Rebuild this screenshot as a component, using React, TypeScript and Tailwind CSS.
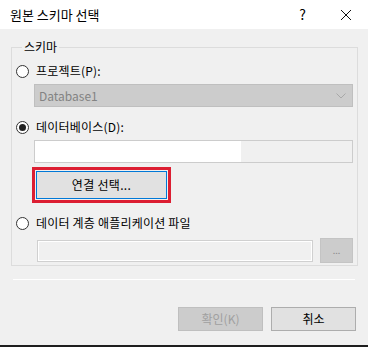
import React from 'react';

const font = { fontFamily: '"Noto Sans CJK KR", "Noto Sans", sans-serif' };

const Radio: React.FC<{ checked?: boolean; label: string }> = ({ checked, label }) => (
  <div className="flex items-center h-[16px]">
    <span className="w-[13px] h-[13px] rounded-full border border-[#333333] bg-white flex items-center justify-center">
      {checked && <span className="w-[7px] h-[7px] rounded-full bg-[#222222]" />}
    </span>
    <span className="ml-[7px] text-[12px] text-black leading-none tracking-[0.2px]">{label}</span>
  </div>
);

const App: React.FC = () => {
  return (
    <div className="w-[368px] h-[347px] bg-[#f0f0f0] flex flex-col overflow-hidden" style={font}>
      {/* title bar */}
      <div className="h-[29px] bg-white flex items-center shrink-0">
        <span className="ml-[10px] text-[13px] text-black">원본 스키마 선택</span>
        <span className="ml-auto mr-[34px] text-[14px] text-black">?</span>
        <svg width="12" height="12" viewBox="0 0 12 12" className="mr-[16px]">
          <path d="M1 1 L11 11 M11 1 L1 11" stroke="#111" strokeWidth="1" />
        </svg>
      </div>

      <fieldset className="mx-[11px] mt-[12px] h-[225px] border border-[#dcdcdc] pl-[4px] pr-[4px] pb-0 pt-[10px]">
        <legend className="ml-[6px] px-[2px] text-[12px] text-black leading-none">스키마</legend>

        <Radio label="프로젝트(P):" />
        <div className="mt-[5px] ml-[18px] h-[23px] bg-[#cccccc] border border-[#bfbfbf] flex items-center px-[4px]">
          <span className="text-[12px] text-[#838383]">Database1</span>
          <svg width="10" height="6" viewBox="0 0 10 6" className="ml-auto mr-[2px]">
            <path d="M0.5 0.5 L5 5 L9.5 0.5" fill="none" stroke="#a8a8a8" strokeWidth="1" />
          </svg>
        </div>

        <div className="mt-[12px]">
          <Radio checked label="데이터베이스(D):" />
        </div>
        <div className="mt-[5px] ml-[18px] h-[23px] bg-[#f0f0f0] border border-[#cccccc] flex">
          <div className="w-[206px] bg-white" />
        </div>

        <div className="mt-[4px] ml-[16px] w-[139px] h-[36px] border-[3px] border-[#dc1e32] p-[1px]">
          <div className="h-full bg-[#e1e1e1] border border-[#0078d7] flex items-center justify-center">
            <span className="text-[12px] text-black tracking-[0.3px]">연결 선택...</span>
          </div>
        </div>

        <div className="mt-[12px]">
          <Radio label="데이터 계층 애플리케이션 파일" />
        </div>
        <div className="mt-[7px] ml-[21px] flex items-center">
          <div className="w-[276px] h-[22px] border border-[#d0d0d0] bg-[#f0f0f0] shadow-[inset_0_0_0_1px_#ffffff]" />
          <div className="ml-[7px] w-[33px] h-[25px] bg-[#cccccc] border border-[#c4c4c4] flex items-center justify-center">
            <span className="text-[9px] text-[#8a8a8a] leading-none">...</span>
          </div>
        </div>
      </fieldset>

      <div className="mt-[13px] mx-[13px] h-[1px] bg-white" />

      <div className="mt-[27px] flex justify-end pr-[12px] gap-[8px]">
        <div className="w-[85px] h-[24px] bg-[#cccccc] border border-[#bfbfbf] flex items-center justify-center">
          <span className="text-[12px] text-[#a0a0a0]">확인(K)</span>
        </div>
        <div className="w-[85px] h-[24px] bg-[#e1e1e1] border border-[#adadad] flex items-center justify-center">
          <span className="text-[12px] text-black">취소</span>
        </div>
      </div>

      <div className="mt-auto h-[2px] bg-[#1e1e1e]" />
    </div>
  );
};

export default App;
